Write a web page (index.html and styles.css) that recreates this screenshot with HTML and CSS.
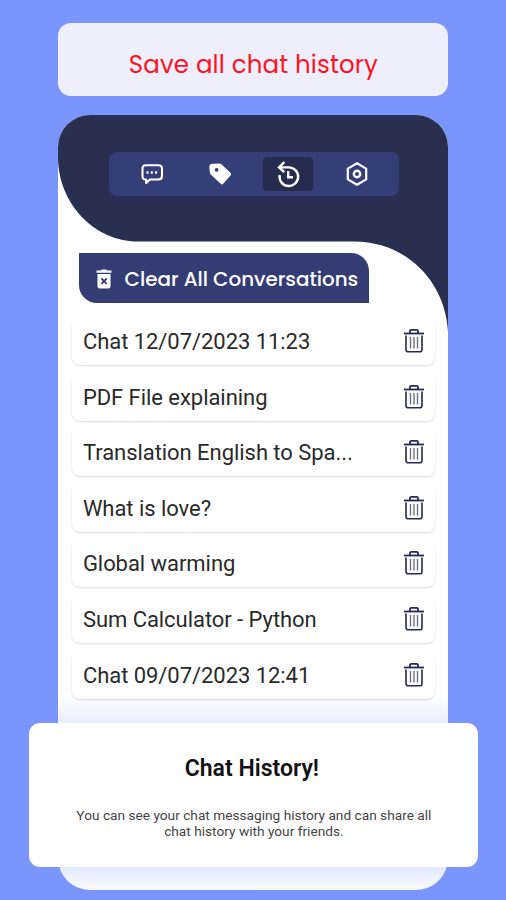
FILE: index.html
```
<!DOCTYPE html>
<html lang="en">
<head>
<meta charset="utf-8">
<title>Chat History</title>
<link rel="stylesheet" href="styles.css">
</head>
<body>
<svg class="defs" width="0" height="0" aria-hidden="true">
  <symbol id="trash" viewBox="0 0 22 26">
    <g fill="none" stroke="#242758">
      <path d="M1 5.5H21" stroke-width="1.8"/>
      <path d="M7 5V3.2Q7 1.8 8.4 1.8H13.6Q15 1.8 15 3.2V5" stroke-width="1.8"/>
      <path d="M3 7.5V21.5Q3 23.8 5.3 23.8H16.7Q19 23.8 19 21.5V7.5" stroke-width="1.6"/>
      <path d="M7.5 9V20.5M11 9V20.5M14.5 9V20.5" stroke-width="1.3" stroke="#666780"/>
    </g>
  </symbol>
</svg>
<h1 class="banner"><span>Save all chat history</span></h1>
<main class="phone">
  <svg class="wave" viewBox="0 0 390 220"><path fill="#292f51" d="M0 0H390V216C387 166 348 126.5 296 126.5H80C36 126.5 0 88 0 42Z"/></svg>
  <nav class="tabs">
    <span class="tab"><svg width="24" height="24" viewBox="0 0 24 24"><path d="M5.5 3.2H18.5Q22 3.2 22 6.7V14Q22 17.5 18.5 17.5H10L6.2 21V17.5H5.5Q2.5 17.5 2.5 14V6.7Q2.5 3.2 5.5 3.2Z" fill="none" stroke="#fff" stroke-width="2.1" stroke-linejoin="round"/><path d="M6.5 10.5H8.5M10.8 10.5H12.8M15.1 10.5H17.1" stroke="#fff" stroke-width="2.4"/></svg></span>
    <span class="tab"><svg width="24" height="24" viewBox="0 0 24 24"><path fill="#fff" fill-rule="evenodd" d="M4.5 1.8L11.5 1.5Q12.4 1.5 13.1 2.1L22.5 10.8Q23.8 12 22.7 13.2L15.2 21.7Q14 23 12.7 21.8L2.8 12.6Q2 11.8 1.9 10.7L1.3 5.2Q1.2 2.1 4.5 1.8ZM8.6 5.9A1.9 1.9 0 1 0 8.6 9.7A1.9 1.9 0 1 0 8.6 5.9Z"/></svg></span>
    <span class="tab tab-active"><svg width="26" height="28" viewBox="0 0 26 28"><g fill="none" stroke="#fff" stroke-width="2.4"><path d="M5.5 7.4H14A9.3 9.3 0 1 1 4.7 15"/><path d="M9.3 2.2L4 7.4L9.3 12.2"/><path d="M13.2 11V17.3H18"/></g></svg></span>
    <span class="tab"><svg width="24" height="26" viewBox="0 0 24 26"><path d="M12 2.3L21.2 7.6V18.4L12 23.7L2.8 18.4V7.6Z" fill="none" stroke="#fff" stroke-width="2.2" stroke-linejoin="round"/><circle cx="12" cy="13" r="3.2" fill="none" stroke="#fff" stroke-width="2.4"/></svg></span>
  </nav>
  <div class="clear">
    <svg width="16" height="20" viewBox="0 0 16 20"><path fill="#fff" d="M.5 1.5H4.8L5.7.4H10.3L11.2 1.5H15.5V3.7H.5Z"/><path fill="#fff" d="M1.5 5H14.5V17.5Q14.5 19.6 12.4 19.6H3.6Q1.5 19.6 1.5 17.5Z"/><path d="M5.5 9.3L10.7 14.8M10.7 9.3L5.5 14.8" stroke="#333c73" stroke-width="1.8"/></svg>
    <span>Clear All Conversations</span>
  </div>
  <ul class="chats">
    <li><span>Chat 12/07/2023 11:23</span><svg><use href="#trash"/></svg></li>
    <li><span>PDF File explaining</span><svg><use href="#trash"/></svg></li>
    <li><span>Translation English to Spa...</span><svg><use href="#trash"/></svg></li>
    <li><span>What is love?</span><svg><use href="#trash"/></svg></li>
    <li><span>Global warming</span><svg><use href="#trash"/></svg></li>
    <li><span>Sum Calculator - Python</span><svg><use href="#trash"/></svg></li>
    <li><span>Chat 09/07/2023 12:41</span><svg><use href="#trash"/></svg></li>
  </ul>
</main>
<section class="note">
  <h2>Chat History!</h2>
  <p>You can see your chat messaging history and can share all<br>chat history with your friends.</p>
</section>
</body>
</html>
```
FILE: styles.css
```
* { box-sizing: border-box; }
body {
  margin: 0;
  height: 900px;
  padding-top: 23.4px;
  position: relative;
  overflow: hidden;
  background: #7b95ff;
  font-family: Roboto, "Liberation Sans", sans-serif;
}
.defs { position: absolute; }
.banner {
  margin: 0 0 18.6px 58.4px;
  width: 390px;
  height: 73px;
  padding-top: 10px;
  border-radius: 13px;
  background: #efeefd;
  display: flex;
  align-items: center;
  justify-content: center;
  color: #fb1420;
  font: 400 24.5px Poppins, Inter, sans-serif;
  letter-spacing: 0.15px;
  white-space: nowrap;
}
.phone {
  position: relative;
  margin-left: 58.4px;
  width: 390px;
  height: 775.4px;
  padding-top: 37px;
  border-radius: 32px;
  overflow: hidden;
  background: linear-gradient(#fff 0 580px, #dfe6ff 622px, #dfe6ff 748px, #fafbff 775px);
}
.wave { position: absolute; left: 0; top: 0; width: 390px; height: 220px; }
.tabs {
  position: relative;
  margin-left: 50.2px;
  width: 290px;
  height: 44px;
  padding: 0 17px 0 18px;
  border-radius: 8px;
  background: #343e77;
  display: flex;
  align-items: center;
  justify-content: space-between;
}
.tab {
  width: 50px;
  height: 34px;
  border-radius: 4px;
  display: flex;
  align-items: center;
  justify-content: center;
}
.tab-active { background: #262c50; }
.clear {
  position: relative;
  margin: 56.7px 0 0 20.4px;
  width: 290px;
  height: 50px;
  padding: 2px 0 0 16.8px;
  border-radius: 0 18px 0 18px;
  background: #333c73;
  display: flex;
  align-items: center;
  gap: 13px;
  color: #fff;
  font: 500 19.9px Poppins, Inter, sans-serif;
  white-space: nowrap;
}
.clear span { letter-spacing: -0.02px; }
.chats {
  position: relative;
  list-style: none;
  margin: 14.3px 0 0 13.5px;
  padding: 0;
  width: 363px;
  display: flex;
  flex-direction: column;
  gap: 7.6px;
}
.chats li {
  height: 48px;
  padding: 0 9.5px 0 11px;
  border-radius: 8px;
  background: #fff;
  box-shadow: 0 1px 2px rgba(0, 0, 0, 0.15);
  display: flex;
  align-items: center;
  justify-content: space-between;
  color: #2a2a2a;
  font-size: 22px;
  letter-spacing: -0.05px;
  white-space: nowrap;
}
.chats span { padding-top: 1px; }
.chats svg { width: 22px; height: 26px; }
.note {
  position: absolute;
  left: 29.4px;
  top: 723px;
  width: 449px;
  height: 144px;
  border-radius: 11px;
  background: #fff;
  text-align: center;
}
.note h2 {
  margin: 32px 0 0;
  padding-right: 4px;
  font-size: 23px;
  line-height: 28px;
  font-weight: 600;
  color: #111;
}
.note p {
  margin: 23.5px 0 0;
  font-size: 13.7px;
  line-height: 16px;
  color: #444;
}
```
